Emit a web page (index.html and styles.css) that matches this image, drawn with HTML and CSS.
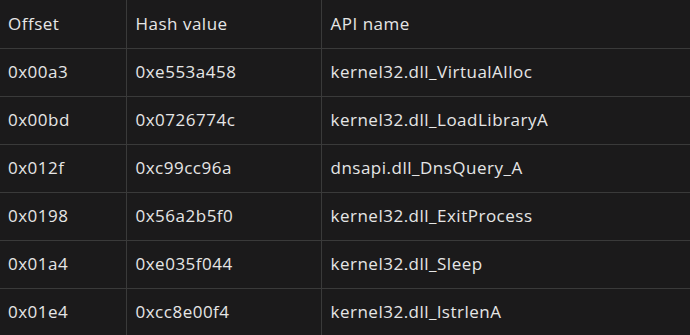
FILE: index.html
```html
<!DOCTYPE html>
<html>
<head>
<meta charset="utf-8">
<link rel="stylesheet" href="styles.css">
</head>
<body>
<table class="api-table">
  <thead>
    <tr><th class="col-offset">Offset</th><th class="col-hash">Hash value</th><th class="col-api">API name</th></tr>
  </thead>
  <tbody>
    <tr><td>0x00a3</td><td>0xe553a458</td><td>kernel32.dll_VirtualAlloc</td></tr>
    <tr><td>0x00bd</td><td>0x0726774c</td><td>kernel32.dll_LoadLibraryA</td></tr>
    <tr><td>0x012f</td><td>0xc99cc96a</td><td>dnsapi.dll_DnsQuery_A</td></tr>
    <tr><td>0x0198</td><td>0x56a2b5f0</td><td>kernel32.dll_ExitProcess</td></tr>
    <tr><td>0x01a4</td><td>0xe035f044</td><td>kernel32.dll_Sleep</td></tr>
    <tr><td>0x01e4</td><td>0xcc8e00f4</td><td>kernel32.dll_lstrlenA</td></tr>
  </tbody>
</table>
</body>
</html>
```
FILE: styles.css
```css
html, body {
  margin: 0;
  padding: 0;
  background: #1b1a1b;
}
body {
  width: 690px;
  height: 335px;
  overflow: hidden;
}
.api-table {
  width: 690px;
  border-collapse: collapse;
  font-family: "Open Sans", Lato, sans-serif;
  font-size: 17px;
  letter-spacing: 0.5px;
  color: #e6e6e6;
}
.api-table th,
.api-table td {
  height: 48px;
  padding: 0 0 1px 8px;
  text-align: left;
  font-weight: 400;
  border-bottom: 1px solid #3a3a3a;
  border-right: 1px solid #3a3a3a;
  vertical-align: middle;
  box-sizing: border-box;
}
.api-table th:last-child,
.api-table td:last-child {
  border-right: none;
}
.api-table tbody tr:last-child td {
  border-bottom: none;
}
.col-offset { width: 126px; }
.col-hash { width: 195px; }
.api-table td:nth-child(2),
.api-table td:nth-child(3),
.api-table th:nth-child(2),
.api-table th:nth-child(3) {
  padding-left: 9px;
}
```
